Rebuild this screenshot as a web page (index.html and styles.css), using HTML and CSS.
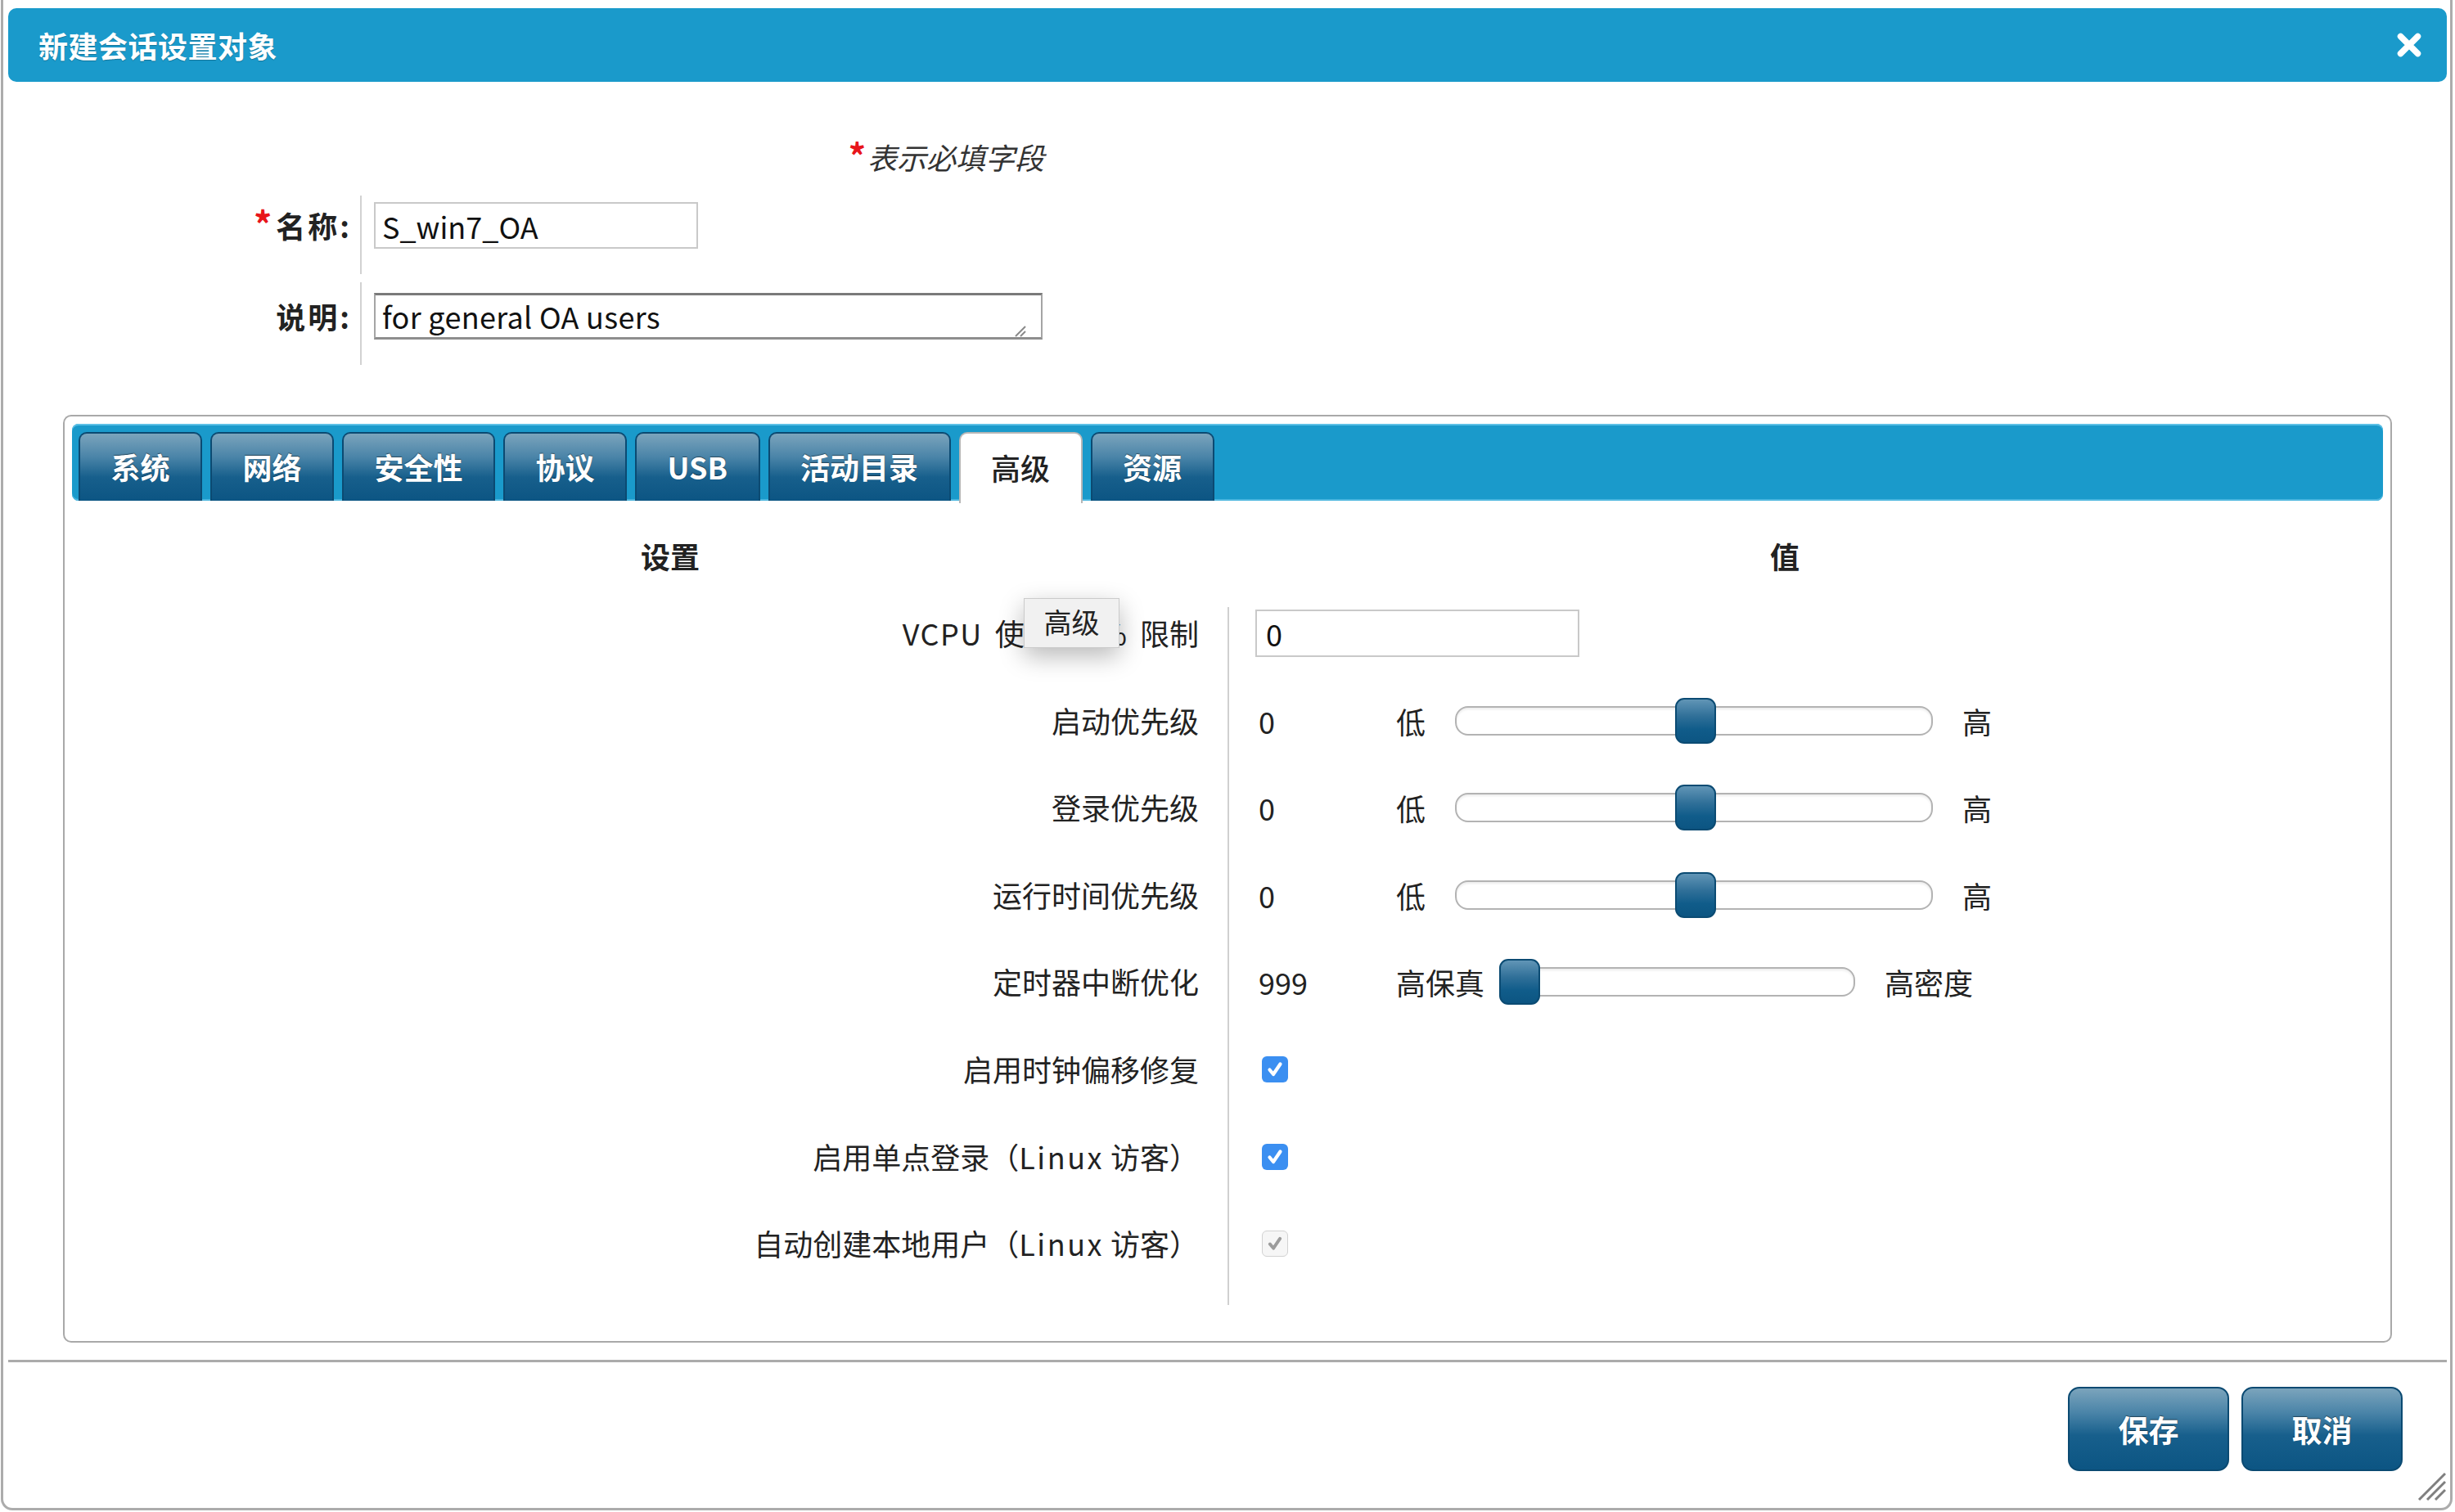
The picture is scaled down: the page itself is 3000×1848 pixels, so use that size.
FILE: index.html
```html
<!DOCTYPE html>
<html lang="zh-CN">
<head>
<meta charset="utf-8">
<title>新建会话设置对象</title>
<link rel="stylesheet" href="styles.css">
</head>
<body>
<div class="dialog">
  <div class="titlebar">
    <span class="title">新建会话设置对象</span>
    <svg class="close" viewBox="0 0 32 32" width="32" height="32"><path d="M5.5 5.5 L26.5 26.5 M26.5 5.5 L5.5 26.5" stroke="#fff" stroke-width="7.5" stroke-linecap="round" fill="none"/></svg>
  </div>

  <div class="note"><span class="req req-note">*</span><span class="note-text">表示必填字段</span></div>

  <div class="form">
    <div class="flabel"><span class="req req-label">*</span>名称:</div>
    <div class="fvalue"><input class="name-input" type="text" value="S_win7_OA"></div>
    <div class="flabel flabel-desc">说明:</div>
    <div class="fvalue fvalue-desc">
      <textarea class="desc">for general OA users</textarea>
      <svg class="ta-grip" viewBox="0 0 16 16" width="16" height="16"><path d="M3 15 L15 3 M9 15 L15 9" stroke="#8a8a8a" stroke-width="2" fill="none"/></svg>
    </div>
  </div>

  <div class="panel">
    <div class="tabbar">
      <div class="tab">系统</div>
      <div class="tab">网络</div>
      <div class="tab">安全性</div>
      <div class="tab">协议</div>
      <div class="tab">USB</div>
      <div class="tab">活动目录</div>
      <div class="tab tab-active">高级</div>
      <div class="tab">资源</div>
    </div>

    <div class="settings">
      <div class="head">设置</div>
      <div class="head">值</div>

      <div class="lbl"><span class="vcpu-word">VCPU</span>使用率<span class="pct">%</span><span class="lim">限制</span></div>
      <div class="val"><div class="vrow"><input class="vcpu" type="text" value="0"></div></div>

      <div class="lbl">启动优先级</div>
      <div class="val"><div class="vrow"><span class="num">0</span><span class="end">低</span><div class="track"><div class="handle" style="--pos:50%"></div></div><span class="end">高</span></div></div>

      <div class="lbl">登录优先级</div>
      <div class="val"><div class="vrow"><span class="num">0</span><span class="end">低</span><div class="track"><div class="handle" style="--pos:50%"></div></div><span class="end">高</span></div></div>

      <div class="lbl">运行时间优先级</div>
      <div class="val"><div class="vrow"><span class="num">0</span><span class="end">低</span><div class="track"><div class="handle" style="--pos:50%"></div></div><span class="end">高</span></div></div>

      <div class="lbl">定时器中断优化</div>
      <div class="val"><div class="vrow"><span class="num">999</span><span class="end">高保真</span><div class="track track-short"><div class="handle" style="--pos:0%"></div></div><span class="end">高密度</span></div></div>

      <div class="lbl">启用时钟偏移修复</div>
      <div class="val"><div class="vrow"><span class="check"><svg viewBox="0 0 32 32" width="32" height="32"><path d="M9.5 16.5 L14 22 L22.5 9.5" stroke="#fff" stroke-width="4.2" stroke-linecap="round" stroke-linejoin="round" fill="none"/></svg></span></div></div>

      <div class="lbl">启用单点登录（<span class="lat">Linux</span>&nbsp;访客）</div>
      <div class="val"><div class="vrow"><span class="check"><svg viewBox="0 0 32 32" width="32" height="32"><path d="M9.5 16.5 L14 22 L22.5 9.5" stroke="#fff" stroke-width="4.2" stroke-linecap="round" stroke-linejoin="round" fill="none"/></svg></span></div></div>

      <div class="lbl">自动创建本地用户（<span class="lat">Linux</span>&nbsp;访客）</div>
      <div class="val"><div class="vrow"><span class="check check-disabled"><svg viewBox="0 0 32 32" width="32" height="32"><path d="M9.5 16.5 L14 22 L22.5 9.5" stroke="#9c9c9c" stroke-width="4.2" stroke-linecap="round" stroke-linejoin="round" fill="none"/></svg></span></div></div>
    </div>
  </div>

  <div class="footer">
    <button class="btn">保存</button>
    <button class="btn">取消</button>
  </div>

  <svg class="grip" viewBox="0 0 36 36" width="36" height="36"><path d="M3 35 L35 3 M13 35 L35 13 M23 35 L35 23" stroke="#7f7f7f" stroke-width="3" fill="none"/></svg>

  <div class="tooltip">高级</div>
</div>
</body>
</html>
```

FILE: styles.css
```css
html, body {
  margin: 0;
  padding: 0;
  background: #ffffff;
}

body {
  font-family: "Noto Sans CJK SC", "Noto Sans", sans-serif;
  color: #222222;
  font-size: 36px;
}

.dialog {
  position: relative;
  margin-left: 1px;
  width: 2996px;
  height: 1846px;
  box-sizing: border-box;
  border: 3px solid #acacac;
  border-top: 0;
  border-radius: 0 0 14px 14px;
  display: flex;
  flex-direction: column;
}

.titlebar {
  margin: 10px 4px 0 6px;
  height: 90px;
  background: #1a9acb;
  border-radius: 10px;
  display: flex;
  align-items: center;
  justify-content: space-between;
  padding: 0 30px 0 37px;
}

.title {
  color: #ffffff;
  font-weight: 700;
  font-size: 36px;
  line-height: 50px;
  letter-spacing: 0.5px;
  text-shadow: 0 1px 1px rgba(0, 0, 0, 0.25);
}

.close {
  display: block;
}

.note {
  margin-top: 66px;
  width: 1272px;
  height: 50px;
  text-align: right;
  line-height: 50px;
  font-size: 36px;
  font-style: italic;
  color: #333333;
}

.req {
  color: #e8151b;
  font-weight: 700;
  font-style: normal;
  line-height: 0;
}

.req-note {
  font-size: 42px;
  margin-right: 2px;
}

.req-label {
  font-size: 44px;
  margin-right: 2px;
}

.form {
  margin-top: 23px;
  display: grid;
  grid-template-columns: 436px auto;
  row-gap: 10px;
  justify-content: start;
}

.flabel {
  text-align: right;
  padding: 8px 10px 0 0;
  height: 57px;
  line-height: 57px;
  font-weight: 700;
  font-size: 36px;
  letter-spacing: 3px;
  color: #222222;
}

.flabel-desc {
  padding-top: 13px;
}

.fvalue {
  border-left: 2px solid #d2d2d2;
  padding: 8px 0 31px 15px;
}

.fvalue-desc {
  position: relative;
  padding-top: 13px;
}

.ta-grip {
  position: absolute;
  left: 796px;
  top: 51px;
}

.name-input {
  display: block;
  width: 396px;
  height: 57px;
  box-sizing: border-box;
  border: 2px solid #c9c9c9;
  padding: 0 8px;
  margin: 0;
  font-family: "Noto Sans CJK SC", "Noto Sans", sans-serif;
  font-size: 36px;
  color: #111111;
  background: #ffffff;
  outline: none;
}

.desc {
  display: block;
  width: 817px;
  height: 57px;
  box-sizing: border-box;
  border-style: solid;
  border-width: 3px 2px 3px 2px;
  border-color: #7a7a7a #a5a5a5 #8e8e8e #a5a5a5;
  padding: 0 8px;
  margin: 0;
  font-family: "Noto Sans CJK SC", "Noto Sans", sans-serif;
  font-size: 36px;
  line-height: 50px;
  letter-spacing: 0.3px;
  color: #111111;
  background: #ffffff;
  overflow: hidden;
  resize: none;
  outline: none;
}

.panel {
  margin-top: 61px;
  margin-left: 73px;
  width: 2846px;
  height: 1134px;
  box-sizing: border-box;
  border: 2px solid #a9a9a9;
  border-radius: 10px;
  padding: 9px;
}

.tabbar {
  height: 94px;
  background: #1a9acb;
  border-radius: 8px;
  box-shadow: inset 0 2px 0 #5cc0e6, inset 0 -2px 0 #4cb6df;
  display: flex;
  align-items: flex-end;
  gap: 10px;
  padding-left: 8px;
}

.tab {
  height: 84px;
  box-sizing: border-box;
  padding: 0 37.5px;
  border: 2px solid #0b4a72;
  border-bottom: 0;
  border-radius: 10px 10px 0 0;
  background: linear-gradient(to bottom, #7ba4bc 0%, #4a84a8 35%, #175f8c 65%, #0c5583 100%);
  color: #ffffff;
  font-weight: 700;
  font-size: 36px;
  line-height: 80px;
  text-shadow: 0 -1px 1px rgba(0, 0, 0, 0.45);
  white-space: nowrap;
}

.tab-active {
  height: 87px;
  margin-bottom: -3px;
  background: #ffffff;
  border-color: #b6b6b6;
  color: #222222;
  font-weight: 500;
  text-shadow: none;
  line-height: 82px;
}

.settings {
  width: 2724px;
  margin: 0 auto;
  display: grid;
  grid-template-columns: 1362px 1362px;
  grid-template-rows: 130px repeat(8, 106.6px);
}

.head {
  display: flex;
  align-items: center;
  justify-content: center;
  padding-top: 4px;
  font-weight: 700;
  font-size: 36px;
  color: #222222;
}

.lbl {
  display: flex;
  justify-content: flex-end;
  align-items: flex-start;
  padding: 2px 35px 0 0;
  line-height: 58px;
  font-size: 36px;
  color: #222222;
  white-space: pre;
}

.lat {
  letter-spacing: 2.5px;
}

.vcpu-word {
  letter-spacing: 1.5px;
  margin-right: 15px;
}

.pct {
  margin-left: 20px;
}

.lim {
  margin-left: 16px;
}

.val {
  border-left: 2px solid #d0d0d0;
  padding: 3px 0 0 32px;
}

.vrow {
  height: 58px;
  display: flex;
  align-items: center;
  font-size: 36px;
  color: #222222;
}

.vcpu {
  display: block;
  width: 396px;
  height: 58px;
  box-sizing: border-box;
  border: 2px solid #c9c9c9;
  padding: 0 11px;
  margin: 0;
  font-family: "Noto Sans CJK SC", "Noto Sans", sans-serif;
  font-size: 36px;
  color: #111111;
  background: #ffffff;
  outline: none;
}

.num {
  width: 172px;
  padding-left: 4px;
  box-sizing: border-box;
  flex: none;
}

.end {
  flex: none;
  white-space: nowrap;
}

.track {
  position: relative;
  flex: none;
  width: 584px;
  height: 36px;
  margin: 0 36px;
  box-sizing: border-box;
  border: 2px solid #b3b3b3;
  border-radius: 16px;
  background: #ffffff;
  box-shadow: inset 0 2px 3px rgba(0, 0, 0, 0.08);
}

.track-short {
  width: 410px;
  margin-left: 43px;
}

.handle {
  position: absolute;
  top: -12px;
  left: calc(var(--pos) - 23px);
  width: 50px;
  height: 56px;
  box-sizing: border-box;
  border: 2px solid #0b4b73;
  border-radius: 11px;
  background: linear-gradient(to bottom, #6195b6 0%, #2f6f98 40%, #105c8a 70%, #0c5582 100%);
}

.track-short .handle {
  left: calc(var(--pos) - 27px);
}

.check {
  margin-left: 8px;
  width: 32px;
  height: 32px;
  box-sizing: border-box;
  border-radius: 6px;
  background: #3b8ff1;
  display: flex;
  align-items: center;
  justify-content: center;
}

.check svg {
  display: block;
}

.check-disabled {
  background: #f6f6f6;
  border: 1.5px solid #d2d2d2;
}

.footer {
  margin: 21px 4px 0 6px;
  border-top: 3px solid #ababab;
  padding: 30px 54px 0 0;
  display: flex;
  justify-content: flex-end;
  gap: 15px;
}

.btn {
  width: 197px;
  height: 103px;
  box-sizing: border-box;
  border: 2px solid #0b4a72;
  border-radius: 14px;
  background: linear-gradient(to bottom, #7ba4bc 0%, #4a84a8 30%, #175f8c 58%, #0c5583 100%);
  color: #ffffff;
  font-family: "Noto Sans CJK SC", "Noto Sans", sans-serif;
  font-weight: 700;
  font-size: 37px;
  text-shadow: 0 -1px 1px rgba(0, 0, 0, 0.45);
  padding: 0;
  margin: 0;
}

.grip {
  position: absolute;
  right: 5px;
  bottom: 9px;
}

.tooltip {
  position: absolute;
  left: 1247px;
  top: 731px;
  width: 117px;
  height: 61px;
  box-sizing: border-box;
  background: #f1f1f1;
  border: 1px solid #cbcbcb;
  box-shadow: 0 10px 30px rgba(0, 0, 0, 0.28);
  font-size: 34px;
  line-height: 56px;
  text-align: center;
  color: #222222;
}
```
